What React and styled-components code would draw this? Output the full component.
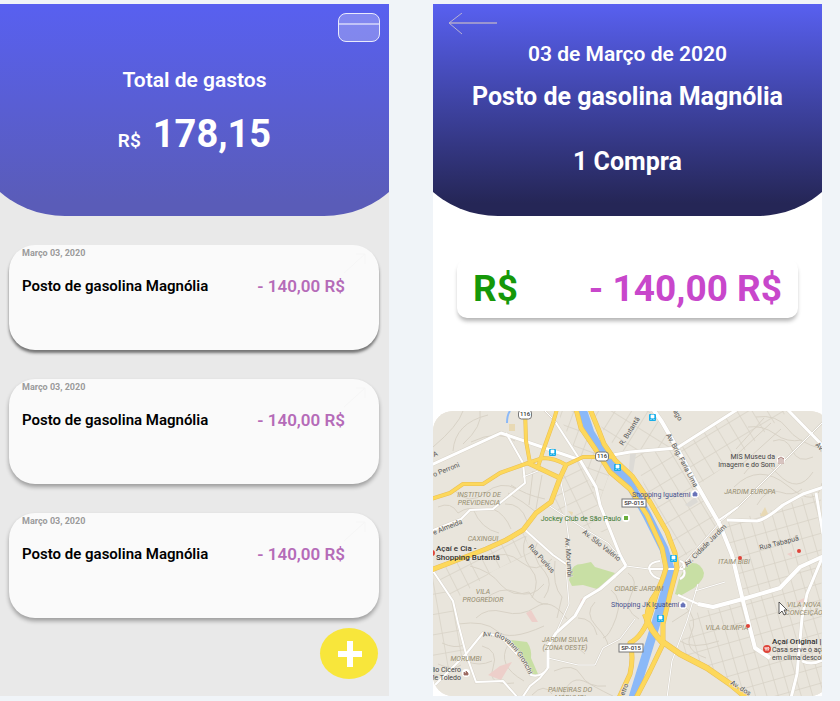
import React from "react";
import styled, { createGlobalStyle } from "styled-components";

const GlobalStyle = createGlobalStyle`
  * { box-sizing: border-box; }
  body {
    margin: 0;
    background: #f0f4f8;
    font-family: Roboto, "Liberation Sans", sans-serif;
  }
  h1, h2, h3, p { margin: 0; }
`;

const Board = styled.main`
  display: grid;
  grid-template-columns: 1fr 1fr;
  gap: 44px;
  padding: 4px 18px 5px 0;
`;

const Screen = styled.section`
  display: flex;
  flex-direction: column;
  overflow: hidden;
  background: ${(p) => p.$background};
`;

const Header = styled.header`
  display: flex;
  flex-direction: column;
  align-items: center;
  margin: 0 -35px;
  padding: 9px 44px 0;
  height: 212px;
  border-radius: 0 0 100px 100px;
  color: #fff;
  font-weight: 700;
  background: linear-gradient(${(p) => p.$from}, ${(p) => p.$to} 94%);
`;

const CardsButton = styled.button`
  align-self: flex-end;
  width: 42px;
  height: 29px;
  padding: 0;
  border: 0;
  background: none;
  cursor: pointer;
  svg { display: block; }
`;

const BackLink = styled.a`
  align-self: flex-start;
  margin-left: 6px;
  height: 22px;
  svg { display: block; }
`;

const TotalLabel = styled.h1`
  margin-top: 26px;
  font-size: 21px;
  line-height: 24px;
  font-weight: 600;
`;

const Total = styled.p`
  display: flex;
  align-items: baseline;
  gap: 12px;
  margin-top: 20px;
  font-size: 38px;
  line-height: 44px;
`;

const Currency = styled.span`
  font-size: 19px;
  font-weight: 600;
`;

const PurchaseDate = styled.p`
  margin-top: 7px;
  font-size: 21px;
  line-height: 24px;
  font-weight: 600;
`;

const Store = styled.h2`
  margin-top: 16px;
  font-size: 25px;
  line-height: 30px;
  font-weight: 700;
`;

const Count = styled.p`
  margin-top: 36px;
  font-size: 25px;
  line-height: 28px;
`;

const Expenses = styled.ul`
  display: flex;
  flex-direction: column;
  gap: 29px;
  margin: 0;
  padding: 29px 10px 0 9px;
  list-style: none;
`;

const ExpenseCard = styled.li`
  position: relative;
  height: 105px;
  padding: 3px 34px 0 13px;
  border-radius: 26px;
  background: #fafafa;
  box-shadow: 0 ${(p) => (p.$raised ? "3px 3px rgba(0, 0, 0, 0.5)" : "3px 4px rgba(0, 0, 0, 0.33)")};
`;

const OpenMark = styled.svg`
  position: absolute;
  top: 7px;
  right: 12px;
`;

const ExpenseDate = styled.time`
  display: block;
  font-size: 9px;
  line-height: 11px;
  font-weight: 700;
  color: #9b9b9b;
`;

const ExpenseRow = styled.div`
  display: flex;
  justify-content: space-between;
  align-items: center;
  margin-top: 17px;
  line-height: 20px;
`;

const ExpenseName = styled.h3`
  font-size: 15px;
  font-weight: 600;
  color: #000;
`;

const ExpenseValue = styled.span`
  font-size: 17px;
  font-weight: 600;
  color: #b56bb8;
`;

const AddButton = styled.button`
  align-self: flex-end;
  display: grid;
  place-items: center;
  width: 58px;
  height: 51px;
  margin: 10px 11px 16px 0;
  padding: 0 0 0 2px;
  border: 0;
  border-radius: 50%;
  background: #f8e63b;
  cursor: pointer;
`;

const AmountPanel = styled.div`
  display: flex;
  justify-content: space-between;
  align-items: center;
  margin: 43px 24px 93px;
  padding: 0 16px;
  height: 59px;
  border-radius: 10px;
  background: #fff;
  box-shadow: 0 4px 4px -1px rgba(0, 0, 0, 0.3);
  font-size: 37px;
  line-height: 44px;
  font-weight: 700;
`;

const AmountCurrency = styled.span`
  color: #159809;
`;

const AmountValue = styled.span`
  color: #c847cb;
`;

const MapFrame = styled.div`
  flex: 1;
  margin-right: -8px;
  border-radius: 20px;
  overflow: hidden;
  background: #e9e5dc;
`;

const MapSvg = styled.svg`
  display: block;
  width: 100%;
  height: 285px;
  font-family: Roboto, "Liberation Sans", sans-serif;
`;

const casing = { fill: "none", stroke: "#e9bf57", strokeLinejoin: "round" };
const yellow = { fill: "none", stroke: "#fdd85b", strokeLinejoin: "round" };

const highways = [
  ["M143 -2 L148 17 L163 39 L177 61 L197 78 L214 104 L229 137 L233 157 Q229 172 223 182 Q213 195 214 210 Q220 222 230 233", 4],
  ["M157 -2 L166 20 L171 33 L182 49 L199 65 L217 91 L234 121 L242 142 L244 157 L237 183 L230 213 L230 233 L217 260 L203 287", 4],
  ["M225 178 L217 204 Q210 225 197 232 Q201 246 197 263 L186 287", 4],
  ["M212 203 Q218 222 230 231 L247 243 L274 257 L297 273 L314 287", 5],
  ["M-2 88 L17 82 L30 73 L50 73 L67 62 L95 52 L110 47 Q122 47 133 54 L150 46 L182 46", 3],
  ["M95 52 L127 67", 4],
  ["M133 54 L127 67 L118 91 L103 102 L90 119 L73 129 L53 138 L27 148 L-2 159", 4],
  ["M92 -2 L93 30 L97 52", 3],
  ["M124 -2 L120 12 L110 40 L105 56", 3],
];

const avenues = [
  ["M-2 54 L68 22 L147 49 L163 76 L167 94 L187 144 L193 155", 3],
  ["M193 155 L182 165 L167 178 L152 187 L142 205 L123 222 L115 235 L115 257", 3],
  ["M115 257 L107 267 L97 275 L89 287", 2],
  ["M220 -2 L229 11 L244 37 L264 74 L287 114 L299 144 L310 190 L322 237 L337 247", 4],
  ["M180 44 L197 41 L244 37 L305 -2", 3],
  ["M354 -2 L391 36", 3],
  ["M294 109 L324 110 Q332 109 350 94 L370 83 L391 76", 3],
  ["M383 82 L390 123", 3],
  ["M265 193 L280 196 L310 188 L347 177 L367 156 L391 145", 4],
  ["M389 147 L374 183 L369 207 L364 263 L358 287", 3],
  ["M369 250 Q380 255 391 248", 3],
  ["M0 160 L20 190 L25 212 L33 243 L43 271 L70 270 L85 287", 2],
  ["M-2 278 L33 243 L50 222 L67 225 L93 253 L98 264 Q108 267 115 257", 2],
  ["M73 22 L90 52 L92 72 L67 92 L60 98 L37 99 L28 108 L-2 120", 2],
  ["M90 66 L105 60", 1],
  ["M127 67 L133 95 L133 107 L136 130 L133 157 L136 193 L123 222", 1],
  ["M115 94 L150 117 L175 132 L193 153", 1],
  ["M92 119 L120 144 L133 153", 2],
  ["M123 12 L147 49", 2],
  ["M110 -2 L124 12", 1],
  ["M391 10 L304 97 L287 111 L260 142 L247 157", 1],
  ["M305 96 L286 109", 2],
  ["M265 173 L254 210 L239 250 L234 287", 1],
  ["M115 247 L145 254 L162 254 L170 237 L187 228 L202 208", 1],
  ["M193 155 L216 158", 1],
  ["M216 158 L250 158 M227 150 Q217 151 216 157 Q218 166 227 168 M247 150 Q252 151 251 157 M247 168 Q253 165 251 159", 2],
  ["M245 184 L265 193", 2],
  ["M262 180 L292 171", 1],
];

const lanes = [
  "M0 36 Q25 15 30 0 M20 40 Q22 12 55 4 M30 33 Q50 15 47 0 M38 31 Q65 18 82 30",
  "M5 96 Q18 90 25 102 Q37 94 44 100 M22 80 Q36 95 52 82 T84 78 M60 98 Q72 103 78 118 M40 98 Q48 118 66 122",
  "M75 82 Q91 91 103 101 M72 93 Q88 92 94 110 M78 74 Q92 84 112 88 M100 60 L96 94 M109 64 L103 98",
  "M50 190 Q67 174 83 181 T111 173 M43 207 Q54 196 71 201 T103 196 T134 208 M25 213 Q52 209 64 220 T111 215",
  "M56 147 Q73 138 88 151 T119 148 M37 155 Q58 160 68 174 Q80 187 96 181 Q103 194 115 193",
  "M93 125 Q86 142 98 158 Q108 169 99 187 M105 130 Q96 145 112 161 Q121 173 111 187 M122 150 Q119 175 129 186 L124 207",
  "M49 235 Q66 239 60 257 T81 272 M33 250 Q46 256 59 250 M75 234 Q63 254 91 270 M9 232 Q22 238 31 234 M5 253 Q20 260 28 254",
  "M122 238 Q140 229 152 243 M121 260 Q141 251 148 264 T173 275 M130 285 Q137 262 155 272 T180 285 M99 284 Q111 271 119 283",
  "M162 191 Q151 202 163 215 T175 235 M145 207 Q160 207 164 224 M178 179 Q190 188 183 207 T170 227 M195 162 Q206 169 198 184 T206 208",
  "M251 195 Q266 207 258 223 T273 247 M239 211 L256 200 M247 230 Q259 239 286 230",
  "M311 63 Q325 42 345 63 T380 61 M301 76 Q326 51 355 75 T389 72 M324 94 Q334 76 347 81 T369 78 M340 30 Q353 25 359 39 T380 46",
  "M315 16 Q330 14 342 23 T369 29 M323 6 Q344 3 354 17 T389 38 M303 38 L331 7 M298 49 L338 12 M307 55 L348 18",
];

const grids = [
  { id: "gridA", angle: -27, size: 12, area: "M0 159 L73 129 L90 119 L98 142 L60 160 L20 190Z" },
  { id: "gridB", angle: -31, size: 13, area: "M200 42 L244 38 L302 0 L355 0 L301 49 L264 75 L287 112 L244 153 L217 91Z" },
  { id: "gridC", angle: -16, size: 11, area: "M290 112 L350 96 L388 78 L389 285 L315 285 L245 241 L259 203 L310 190Z" },
  { id: "gridE", angle: 32, size: 14, area: "M158 0 L220 0 L244 37 L186 43Z" },
  { id: "gridF", angle: 64, size: 13, area: "M119 92 L128 67 L146 50 L166 92 L180 125 L137 111Z" },
  { id: "gridD", angle: 20, size: 11, area: "M124 0 L143 0 L163 38 L177 61 L166 92 L147 49Z" },
  { id: "gridG", angle: -10, size: 15, area: "M0 162 L20 190 L33 243 L0 270Z" },
];

const parks = [
  "M138 162 Q139 153 149 153 L158 151 L162 156 L182 162 L174 172 L164 178 L150 174 L139 175 L136 169Z",
  "M78 229 L94 231 Q99 238 98 247 L105 263 L100 265 L88 244Z",
  "M254 153 Q267 149 271 162 Q271 169 261 177 L247 185 L242 183 L246 168Z",
];

const areaNames = [
  [46, 86, "INSTITUTO DE"],
  [46, 94, "PREVIDENCIA"],
  [50, 130, "CAXINGUI"],
  [50, 183, "VILA"],
  [50, 191, "PROGREDIOR"],
  [33, 250, "MORUMBI"],
  [132, 231, "JARDIM SILVIA"],
  [132, 239, "(ZONA OESTE)"],
  [137, 281, "PAINEIRAS DO"],
  [137, 289, "MORUMBI"],
  [206, 180, "CIDADE JARDIM"],
  [317, 83, "JARDIM EUROPA"],
  [301, 153, "ITAIM BIBI"],
  [294, 219, "VILA OLIMPIA"],
  [371, 196, "VILA NOVA"],
  [371, 204, "CONCEIÇÃO"],
];

const streetNames = [
  [1, 66, -22, "o Perroni"],
  [1, 124, -22, "e Almeida"],
  [1, 46, -22, "A"],
  [190, 35, -58, "R. Butantã"],
  [233, 24, 62, "Av. Brig. Faria Lima"],
  [240, 0, 62, "ago"],
  [149, 122, 38, "Av. São Valério"],
  [132, 127, 86, "Av. Morumbi"],
  [95, 136, 48, "Rua Puréus"],
  [254, 156, -45, "Av. Cidade Jardim"],
  [327, 139, -14, "Rua Tabapuã"],
  [382, 34, 48, "Av."],
  [297, 273, 32, "Av. dos"],
  [191, 285, -68, "etro"],
];

function Shield({ x, y, label, rounded }) {
  const width = rounded ? 13 : 24;
  return (
    <g>
      <rect x={x - width / 2} y={y - 4} width={width} height={rounded ? 9 : 8} rx={rounded ? 3 : 0} fill="#fff" stroke="#777" />
      <text x={x} y={y + 2} fontSize="6" fontWeight="500" fill="#333" textAnchor="middle">{label}</text>
    </g>
  );
}

function Station({ x, y }) {
  return (
    <g transform={`translate(${x} ${y})`}>
      <rect x="-3" y="-3" width="7" height="7" rx="1" fill="#19aee8" />
      <path d="M-1 -2H2V1H-1Z M-1 2V3 M2 2V3" fill="#fff" stroke="#fff" strokeWidth=".7" />
    </g>
  );
}

function ShopPin({ x, y }) {
  return (
    <g transform={`translate(${x} ${y})`}>
      <circle r="4" fill="#fff" />
      <path d="M-2 2V-1H2V2Z M-1 -1Q0 -4 1 -1" fill="#6973b9" stroke="#6973b9" strokeWidth=".7" />
    </g>
  );
}

function CityMap() {
  return (
    <MapSvg viewBox="0 0 397 285" preserveAspectRatio="xMinYMin slice" role="img" aria-label="Mapa">
      <defs>
        {grids.map((g) => (
          <pattern key={g.id} id={g.id} width={g.size} height={g.size + 5} patternUnits="userSpaceOnUse" patternTransform={`rotate(${g.angle})`}>
            <path d={`M0 0H${g.size} M0 0V${g.size + 5}`} stroke="#d8d2c6" fill="none" strokeWidth="1.5" />
          </pattern>
        ))}
        <path id="giovanni" d="M50 226 Q66 222 79 237 T98 270" />
      </defs>
      <rect width="397" height="285" fill="#e9e5dc" />
      {grids.map((g) => <path key={g.id} d={g.area} fill={`url(#${g.id})`} />)}
      {lanes.map((d) => <path key={d} d={d} stroke="#d8d2c6" fill="none" />)}
      {parks.map((d) => <path key={d} d={d} fill="#c8dfa4" />)}
      <g fill="#edcfca">
        <path d="M93 202 L98 199 L105 211 L99 211Z M55 264 L67 255 L79 251 L74 259 L68 269Z M148 188 L153 186 L151 194 L146 195Z M363 191 L373 186 L372 192Z M354 143 L359 141 L359 146Z" />
      </g>
      <path d="M76 13 H82 V20 H76Z M327 105 L332 96 L336 105Z M135 100 L140 101 L139 105Z" fill="#e8d9b4" />
      <path d="M197 43 L203 43 L200 62 L196 60Z M252 94 L262 86 L265 91 L257 96Z" fill="#dcdad5" />
      <path d="M74 12 Q74 4 77 0" fill="none" stroke="#8bb9f8" strokeWidth="2" />
      {avenues.map(([d, w]) => <path key={d} d={d} fill="none" stroke="#d9d4ca" strokeWidth={w + 1} />)}
      <path d="M149 -2 L157 22 L172 46 L195 70 L214 104 L231 138 L237 158 L233 178 L220 222 L199 290" fill="none" stroke="#8bb9f8" strokeWidth="9" strokeLinejoin="round" />
      {avenues.map(([d, w]) => <path key={d} d={d} fill="none" stroke="#fff" strokeWidth={w} strokeLinejoin="round" />)}
      {highways.map(([d, w]) => <path key={d} d={d} {...casing} strokeWidth={w + 1} />)}
      {highways.map(([d, w]) => <path key={d} d={d} {...yellow} strokeWidth={w} />)}

      <g fontSize="7" fontStyle="italic" fill="#958c6e" textAnchor="middle">
        {areaNames.map(([x, y, name]) => <text key={name + y} x={x} y={y}>{name}</text>)}
      </g>
      <g fontSize="7" fill="#555" stroke="#e9e5dc" strokeWidth="1" paintOrder="stroke">
        {streetNames.map(([x, y, angle, name]) => (
          <text key={name} transform={`translate(${x} ${y}) rotate(${angle})`}>{name}</text>
        ))}
        <text><textPath href="#giovanni">Av. Giovanni Gronchi</textPath></text>
      </g>

      <Shield x={92} y={3} label="116" rounded />
      <Shield x={169} y={45} label="116" rounded />
      <Shield x={201} y={92} label="SP-015" />
      <Shield x={198} y={237} label="SP-015" />
      <Station x={119} y={41} />
      <Station x={184} y={56} />
      <Station x={219} y={6} />
      <Station x={240} y={147} />
      <Station x={227} y={207} />

      <g fontSize="7" fill="#46518f">
        <text x="199" y="86">Shopping Iguatemi</text>
        <text x="178" y="196">Shopping JK Iguatemi</text>
      </g>
      <ShopPin x={262} y={83} />
      <ShopPin x={250} y={194} />
      <circle cx="193" cy="107" r="4" fill="#fff" />
      <rect x="191" y="105" width="4" height="4" fill="#6bae3c" />
      <text x="188" y="110" fontSize="7" fill="#3b7833" textAnchor="end">Jockey Club de São Paulo</text>

      <g fontSize="7" fill="#444" textAnchor="end">
        <text x="342" y="48">MIS Museu da</text>
        <text x="342" y="56">Imagem e do Som</text>
        <text x="28" y="261">lio Cicero</text>
        <text x="28" y="269">le Toledo</text>
      </g>
      <g fill="#fff" stroke="#9c6961" strokeWidth=".8">
        <circle cx="348" cy="49" r="4" stroke="none" />
        <path d="M345 48L348 46L351 48Z M346 49V51 M348 49V51 M350 49V51 M345 52H351" />
        <circle cx="33" cy="262" r="4" stroke="none" />
        <path d="M31 261L33 263V260L35 262V264H31Z" fill="#9c6961" />
      </g>
      <g fontSize="8" fontWeight="500" fill="#333">
        <text x="3" y="140">Açaí e Cia -</text>
        <text x="3" y="149">Shopping Butantã</text>
        <text x="339" y="233">Açaí Original |</text>
      </g>
      <g fontSize="7" fill="#444">
        <text x="339" y="241">Casa serve o aça</text>
        <text x="339" y="249">em clima descol</text>
      </g>
      <g fill="#df4439">
        <circle cx="-1" cy="142" r="3" />
        <circle cx="307" cy="147" r="2" />
        <circle cx="366" cy="140" r="2" />
        <circle cx="315" cy="215" r="2" />
        <circle cx="334" cy="238" r="4" />
      </g>
      <path d="M332 236V238H334V236 M333 236V240 M335 240V236Q337 237 335 239" fill="none" stroke="#fff" strokeWidth=".7" />
      <path d="M346 191V203L349 200L351 204L353 203L351 199H354Z" fill="#fff" stroke="#333" strokeWidth=".8" />
    </MapSvg>
  );
}

const expenses = [
  { id: 1, date: "Março 03, 2020", name: "Posto de gasolina Magnólia", value: "- 140,00 R$", raised: true },
  { id: 2, date: "Março 03, 2020", name: "Posto de gasolina Magnólia", value: "- 140,00 R$" },
  { id: 3, date: "Março 03, 2020", name: "Posto de gasolina Magnólia", value: "- 140,00 R$" },
];

export default function App() {
  return (
    <>
      <GlobalStyle />
      <Board>
        <Screen $background="#e9e9e9">
          <Header $from="#5860f0" $to="#5a5cb8">
            <CardsButton type="button" aria-label="Cartões">
              <svg width="42" height="29" viewBox="0 0 42 29">
                <rect x=".5" y=".5" width="41" height="28" rx="7.5" fill="#fff" fillOpacity=".25" stroke="#fff" strokeOpacity=".85" />
                <path d="M1 11H41" stroke="#fff" strokeOpacity=".5" strokeWidth="2" />
              </svg>
            </CardsButton>
            <TotalLabel>Total de gastos</TotalLabel>
            <Total><Currency>R$</Currency>178,15</Total>
          </Header>
          <Expenses>
            {expenses.map((e) => (
              <ExpenseCard key={e.id} $raised={e.raised}>
                <OpenMark width="24" height="22" viewBox="0 0 24 22" fill="none" stroke="#f6f6f6">
                  <path d="M1 21L22 2M13 2H22V12" />
                </OpenMark>
                <ExpenseDate dateTime="2020-03-03">{e.date}</ExpenseDate>
                <ExpenseRow>
                  <ExpenseName>{e.name}</ExpenseName>
                  <ExpenseValue>{e.value}</ExpenseValue>
                </ExpenseRow>
              </ExpenseCard>
            ))}
          </Expenses>
          <AddButton type="button" aria-label="Adicionar gasto">
            <svg width="26" height="26" viewBox="0 0 26 26">
              <path d="M13 0V26M1 13H25" stroke="#fff" strokeWidth="6" />
            </svg>
          </AddButton>
        </Screen>

        <Screen $background="#ffffff">
          <Header $from="#5860f0" $to="#252656">
            <BackLink href="#" aria-label="Voltar">
              <svg width="50" height="22" viewBox="0 0 50 22" fill="none">
                <path d="M1 10H49" stroke="#9a95d0" strokeWidth="2" />
                <path d="M14 0L1 10L14 21" stroke="#b9b3d3" />
              </svg>
            </BackLink>
            <PurchaseDate>03 de Março de 2020</PurchaseDate>
            <Store>Posto de gasolina Magnólia</Store>
            <Count>1 Compra</Count>
          </Header>
          <AmountPanel>
            <AmountCurrency>R$</AmountCurrency>
            <AmountValue>- 140,00 R$</AmountValue>
          </AmountPanel>
          <MapFrame>
            <CityMap />
          </MapFrame>
        </Screen>
      </Board>
    </>
  );
}
